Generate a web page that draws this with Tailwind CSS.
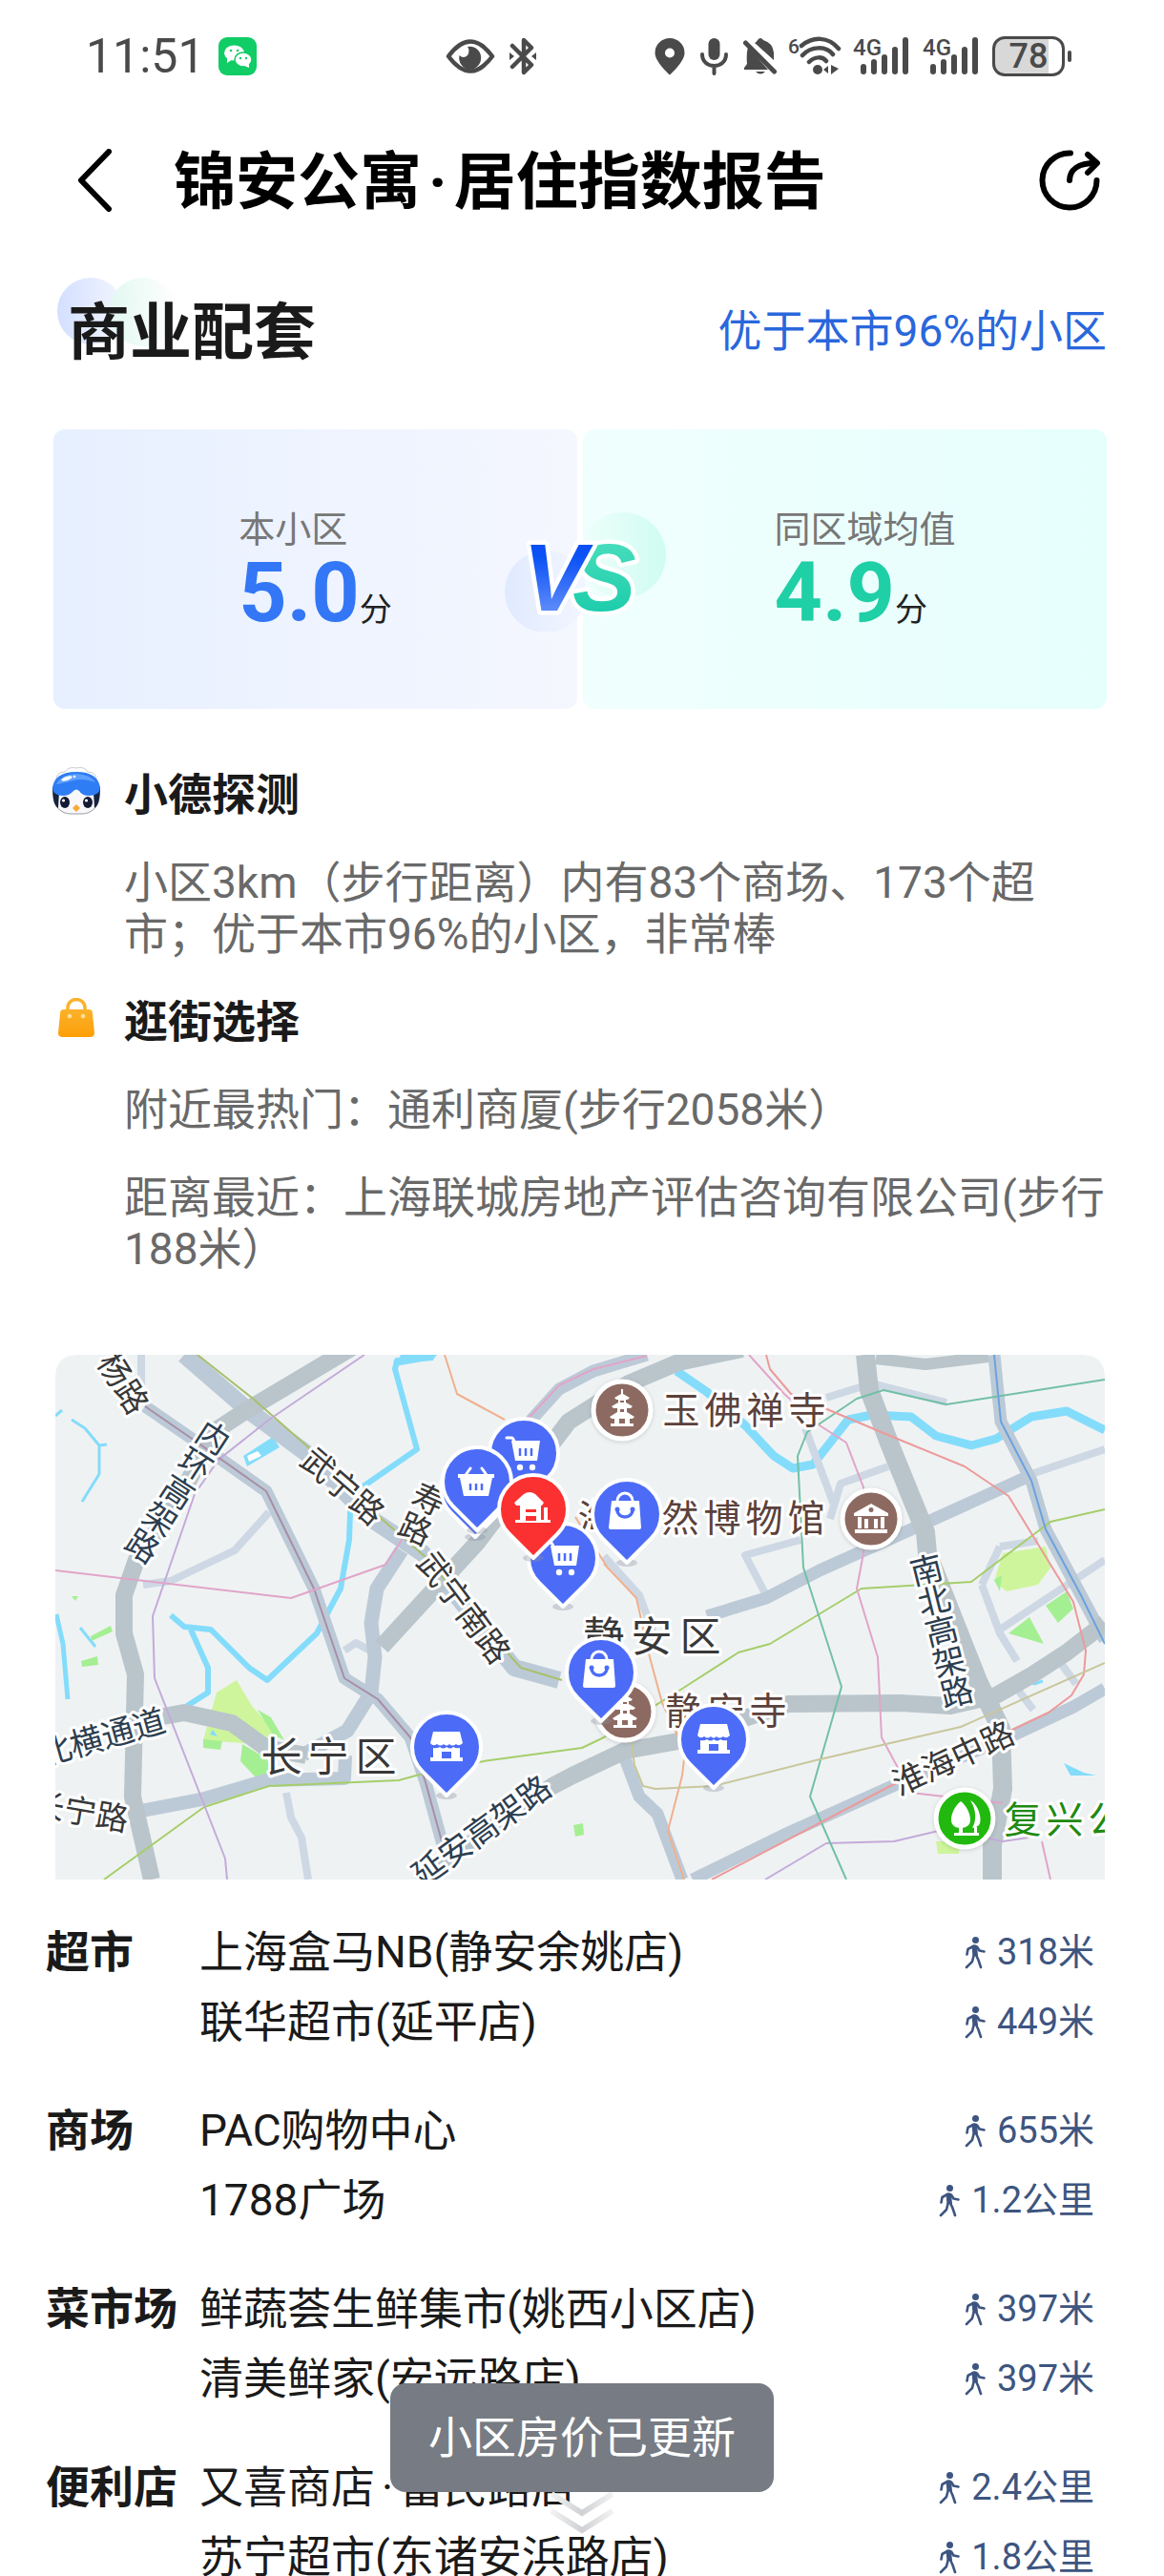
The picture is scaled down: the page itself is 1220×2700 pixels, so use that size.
<!DOCTYPE html>
<html lang="zh-CN">
<head>
  <meta charset="UTF-8">
  <meta name="viewport" content="width=device-width, initial-scale=1.0">
  <title>锦安公寓·居住指数报告</title>
  <script src="https://cdn.jsdelivr.net/npm/@tailwindcss/browser@4"></script>
</head>
<body class="h-screen overflow-hidden bg-white font-[Roboto,'Noto_Sans_CJK_SC',sans-serif] text-[#1a1a1a]">

  <!-- shared symbols -->
  <svg class="hidden">
    <symbol id="walk" viewBox="0 0 22 34">
      <circle cx="11.500" cy="3.500" r="3.500" fill="currentColor"/>
      <path d="M7.500 9.500Q10 7.500 13 9L14 20L8.500 20.500Z" fill="currentColor"/>
      <path d="M9 10L3.500 13L2.500 18.500M13 10.500L15.500 14.500L20.500 15.500M12 19L14.500 24.500L17 32M9.500 20L8 26L2 32" fill="none" stroke="currentColor" stroke-width="2.600" stroke-linecap="round" stroke-linejoin="round"/>
    </symbol>
    <symbol id="signal" viewBox="0 0 59 42">
      <text x="0" y="20" font-size="24" font-weight="500" fill="currentColor">4G</text>
      <path d="M11 32V37M22 27V37M33 22V37M44 14V37M55 4V37" stroke="currentColor" stroke-width="6" stroke-linecap="round"/>
    </symbol>
    <symbol id="pin" viewBox="-42 -42 84 100" overflow="visible">
      <ellipse cx="0" cy="51" rx="11" ry="4" fill="#8a8fa0" opacity=".35"/>
      <path d="M0 51L-25.500 25.500A36 36 0 1 1 25.500 25.500Z" fill="currentColor" stroke="#fff" stroke-width="4" stroke-linejoin="round"/>
    </symbol>
    <symbol id="i-cart" viewBox="-20 -20 40 40" overflow="visible">
      <path d="M-18 -16H-13Q-11 -16 -10 -12" fill="none" stroke="#fff" stroke-width="3" stroke-linecap="round"/>
      <path d="M-13 -13H17L14 8H-9Z" fill="#fff"/>
      <path d="M-4 -5V3M2 -5V3M8 -5V3" stroke="#4c6cf7" stroke-width="2.500"/>
      <circle cx="-4" cy="15" r="3.200" fill="#fff"/><circle cx="9" cy="15" r="3.200" fill="#fff"/>
    </symbol>
    <symbol id="i-basket" viewBox="-20 -20 40 40" overflow="visible">
      <path d="M-6 -14L-11 -7M6 -14L11 -7" stroke="#fff" stroke-width="3" stroke-linecap="round"/>
      <path d="M-19 -8H19V-4H17L13 15H-13L-17 -4H-19Z" fill="#fff"/>
      <path d="M-6 2V9M0 2V9M6 2V9" stroke="#4c6cf7" stroke-width="2.500"/>
    </symbol>
    <symbol id="i-bag" viewBox="-20 -20 40 40" overflow="visible">
      <path d="M-8 -9V-12A8 8 0 0 1 8 -12V-9" fill="none" stroke="#fff" stroke-width="3"/>
      <path d="M-14 -12H15L17 16Q17 18 15 18H-15Q-17 18 -17 16Z" fill="#fff"/>
      <path d="M-8 -2A8 7 0 0 0 8 -2" fill="none" stroke="#4c6cf7" stroke-width="3.500"/>
      <circle cx="-8" cy="-3" r="2.500" fill="#4c6cf7"/><circle cx="8" cy="-3" r="2.500" fill="#4c6cf7"/>
    </symbol>
    <symbol id="i-shop" viewBox="-20 -20 40 40" overflow="visible">
      <path d="M-14 -14H14L17 -2Q13 2 10 -1Q6 2 3 -1Q0 2 -3 -1Q-6 2 -10 -1Q-14 2 -17 -2Z" fill="#fff"/>
      <path d="M-14 3Q-10 4 -7 2Q-3 5 0 2Q4 5 7 2Q10 4 14 3V13H17V17H-17V13H-14Z" fill="#fff"/>
      <path d="M-5 7H5V14H-5Z" fill="#4c6cf7"/>
    </symbol>
    <symbol id="i-home" viewBox="-20 -20 40 40" overflow="visible">
      <path d="M-20 -5L-10 -14Q-4 -18 2 -14L11 -5L9 -2H-18Z" fill="#fff"/>
      <path d="M-14 -3H8V13H18V16H-19V13H-14Z" fill="#fff"/>
      <path d="M11 0H15V14H11Z" fill="#fff"/>
      <path d="M-8 2H3V5H-8ZM-8 9H3V14H-8Z" fill="#fb3030"/>
    </symbol>
    <symbol id="i-pagoda" viewBox="-20 -20 40 40" overflow="visible">
      <path d="M-1 -22H1V-17L8 -13L6 -11H4V-8L11 -4L9 -2H5V2L13 7L11 9H8V14H12V17H-12V14H-8V9H-11L-13 7L-5 2V-2H-9L-11 -4L-4 -8V-11H-6L-8 -13L-1 -17Z" fill="#fff"/>
      <path d="M-2 -10H2V-8H-2ZM-2 -1H2V2H-2ZM-3 9H3V14H-3Z" fill="#8d6a61"/>
    </symbol>
  </svg>

  <!-- status bar -->
  <div class="flex h-[118px] items-center pr-[104px] pl-[90px] text-[#4a4a4a]">
    <span class="text-[50px]">11:51</span>
    <svg class="ml-[14px] size-10" viewBox="0 0 40 40">
      <rect width="40" height="40" rx="9" fill="#10cd66"/>
      <ellipse cx="16.500" cy="16.500" rx="10.500" ry="8" fill="#fff"/><path d="M9 21L9 27L15 23Z" fill="#fff"/>
      <ellipse cx="26" cy="23.500" rx="9" ry="7.500" fill="#fff" stroke="#10cd66" stroke-width="1.500"/><path d="M32 28L32 32L27 30Z" fill="#fff"/>
      <g fill="#10cd66"><circle cx="13" cy="14" r="1.300"/><circle cx="20" cy="14" r="1.300"/><circle cx="23" cy="22" r="1.200"/><circle cx="29" cy="22" r="1.200"/></g>
    </svg>
    <svg class="ml-[198px] h-9 w-[52px]" viewBox="0 0 52 36">
      <path d="M3 18Q26 -13 49 18Q26 49 3 18Z" fill="none" stroke="currentColor" stroke-width="4.500" stroke-linejoin="round"/>
      <path d="M23 8A11.500 12 0 1 1 14.500 17Q19 21 23 17Q26 12 23 8Z" fill="currentColor"/>
    </svg>
    <svg class="ml-[15px] h-10 w-7" viewBox="0 0 28 40">
      <path d="M3 9L23 29L15 37V3L23 11L3 31" fill="none" stroke="currentColor" stroke-width="4.500" stroke-linecap="round" stroke-linejoin="round"/>
      <path d="M0 16L5 20L0 24ZM28 16L23 20L28 24Z" fill="currentColor"/>
    </svg>
    <div class="ml-auto flex items-center">
      <svg class="h-10 w-8" viewBox="0 0 32 40">
        <path fill-rule="evenodd" d="M16 1A15.500 15.500 0 0 0 .5 16.500C.5 26 16 39.500 16 39.500S31.500 26 31.500 16.500A15.500 15.500 0 0 0 16 1ZM16 11.500A5 5 0 1 1 16 21.500A5 5 0 1 1 16 11.500Z" fill="currentColor"/>
      </svg>
      <svg class="ml-4 h-10 w-[29px]" viewBox="0 0 29 40">
        <rect x="8.500" y="1" width="12" height="23" rx="6" fill="currentColor"/>
        <path d="M2 18C2 34 27 34 27 18M14.500 30V38" fill="none" stroke="currentColor" stroke-width="4" stroke-linecap="round"/>
      </svg>
      <svg class="ml-4 h-10 w-[35px]" viewBox="0 0 35 40">
        <path d="M5 10Q3 18 4 28L1 32V34H26L5 10ZM12 6Q14 5 15 3Q18 -1 21 3Q31 6 32 16L32 24ZM13 36H23Q18 41 13 36Z" fill="currentColor"/>
        <path d="M2.500 6L32.500 36" stroke="currentColor" stroke-width="5" stroke-linecap="round"/>
      </svg>
      <svg class="ml-3 h-[42px] w-[56px]" viewBox="0 0 56 42">
        <text x="0" y="18" font-size="21" font-weight="500" fill="currentColor">6</text>
        <path d="M14 10C26 0 42 0 53 13M15 20C24 10 40 10 47 19M22 27C28 21 36 21 40 26" fill="none" stroke="currentColor" stroke-width="4.500" stroke-linecap="round"/>
        <circle cx="31" cy="35" r="5" fill="currentColor"/><path d="M37 35L42 31V39ZM53 34L45 30V40Z" fill="currentColor"/>
      </svg>
      <svg class="ml-3 h-[42px] w-[59px]"><use href="#signal"/></svg>
      <svg class="ml-[14px] h-[42px] w-[59px]"><use href="#signal"/></svg>
      <div class="relative ml-[14px] flex h-[42px] w-[76px] items-center justify-center rounded-[13px] border-3 border-[#4a4a4a] bg-linear-to-r from-[#d8d8d8] from-80% to-white to-80% text-[36px] font-medium">
        78<span class="absolute -right-[10px] h-3 w-1 rounded-full bg-[#4a4a4a]"></span>
      </div>
    </div>
  </div>

  <!-- title bar -->
  <header class="flex h-[142px] items-center pr-[66px] pl-[80px] text-black">
    <button type="button" aria-label="返回">
      <svg class="h-[66px] w-[38px]" viewBox="0 0 38 66"><path d="M34 3L5 33L34 63" fill="none" stroke="currentColor" stroke-width="6" stroke-linecap="round" stroke-linejoin="round"/></svg>
    </button>
    <h1 class="ml-[64px] pt-[6px] text-[65px] font-bold">锦安公寓<span class="mx-[7px]">·</span>居住指数报告</h1>
    <button type="button" class="ml-auto" aria-label="分享">
      <svg class="size-[66px]" viewBox="0 0 66 66" fill="none" stroke="currentColor" stroke-width="6" stroke-linecap="round" stroke-linejoin="round">
        <path d="M34 4.500A28.500 28.500 0 1 0 61.500 33M33 33C33 22 42 15 60 15M52 6L62 15L52 25"/>
      </svg>
    </button>
  </header>

  <main>
    <div class="flex h-[174px] items-center justify-between pr-[60px] pl-[71px]">
      <h2 class="relative pt-[6px] text-[65px] font-bold">
        <span class="absolute -top-1 -left-[11px] size-[70px] rounded-full bg-linear-to-r from-[#d3dfff] to-[#f3f6ff]"></span>
        <span class="absolute -top-1 left-[43px] size-[72px] rounded-full bg-linear-to-r from-[#e2f8f1] to-white"></span>
        <span class="relative">商业配套</span>
      </h2>
      <a href="#" class="text-[46px] text-[#2a67dc]">优于本市96%的小区</a>
    </div>

    <!-- score comparison -->
    <div class="relative mt-4 mr-[60px] ml-[56px] grid h-[293px] grid-cols-2 gap-[6px]">
      <div class="flex items-center justify-center rounded-xl bg-linear-to-r from-[#e7f0ff] to-[#f5f7ff]">
        <div>
          <p class="text-[38px] leading-[48px] text-[#777]">本小区</p>
          <p class="flex items-baseline"><b class="text-[88px] leading-[84px] text-[#3377f6]">5.0</b><span class="text-[34px] leading-[48px] text-[#222]">分</span></p>
        </div>
      </div>
      <div class="flex items-center justify-center rounded-xl bg-linear-to-r from-[#f0fffd] to-[#e6fffd] pl-[42px]">
        <div>
          <p class="text-[38px] leading-[48px] text-[#777]">同区域均值</p>
          <p class="flex items-baseline"><b class="text-[88px] leading-[84px] text-[#1fcfa5]">4.9</b><span class="text-[34px] leading-[48px] text-[#222]">分</span></p>
        </div>
      </div>
      <svg class="absolute top-1/2 left-1/2 h-[130px] w-[184px] -translate-x-1/2 -translate-y-1/2" viewBox="0 0 184 130" font-family="Liberation Sans, sans-serif" font-weight="bold" font-style="italic" font-size="100">
        <defs>
          <linearGradient id="gv" x1="0" y1="0" x2="0" y2="1"><stop offset=".3" stop-color="#0a50f5"/><stop offset="1" stop-color="#7ba0fb"/></linearGradient>
          <linearGradient id="gs" x1="0" y1="0" x2="0" y2="1"><stop offset=".2" stop-color="#45dcbb"/><stop offset="1" stop-color="#12c9a7"/></linearGradient>
          <linearGradient id="cb"><stop offset="0" stop-color="#e0eafe"/><stop offset="1" stop-color="#f3f6ff"/></linearGradient>
          <linearGradient id="cg"><stop offset="0" stop-color="#effffb"/><stop offset="1" stop-color="#cffcf1"/></linearGradient>
        </defs>
        <circle cx="56" cy="88" r="43" fill="url(#cb)"/>
        <circle cx="137" cy="50" r="45" fill="url(#cg)"/>
        <g stroke="#fff" stroke-width="9" stroke-linejoin="round" paint-order="stroke">
          <text x="84" y="108" fill="url(#gs)">S</text>
          <text x="32" y="108" fill="url(#gv)">V</text>
        </g>
      </svg>
    </div>

    <!-- highlights -->
    <div class="mt-[63px] flex flex-col gap-[38px] pr-[56px] pl-[130px] text-[46px] leading-[54px] text-[#696969]">
      <h3 class="relative font-bold text-[#1a1a1a]">
        <svg class="absolute -top-[2px] -left-[75px] size-[50px]" viewBox="0 0 50 50">
          <path d="M4 16Q3 5 13 5Q17 -1 25 1Q34 -1 37 5Q47 5 46 16Z" fill="#fff" stroke="#c9cbd4"/>
          <rect x="1" y="12" width="48" height="37" rx="18" fill="#f8f8fb" stroke="#9a9ca8"/>
          <path d="M0 20Q0 40 6 43L7 26ZM50 20Q50 40 44 43L43 26Z" fill="#17233f"/>
          <path d="M0 22Q2 5 25 5Q48 5 50 22Q49 30 38 30Q31 30 28 25Q25 22 22 25Q18 30 11 30Q1 30 0 22Z" fill="#2f7df4"/>
          <path d="M4 18Q9 8 25 7Q40 8 45 16Q32 11 22 14Q10 17 4 18Z" fill="#5fa0ff"/>
          <ellipse cx="15" cy="12" rx="6" ry="2" fill="#fff" transform="rotate(-18 15 12)"/><circle cx="23" cy="10" r="1.300" fill="#fff"/>
          <ellipse cx="13" cy="37" rx="5" ry="6" fill="#141a33"/><ellipse cx="37" cy="37" rx="5" ry="6" fill="#141a33"/>
          <circle cx="11.500" cy="35" r="1.600" fill="#fff"/><circle cx="35.500" cy="35" r="1.600" fill="#fff"/>
          <path d="M25 39L29 43L25 47L21 43Z" fill="#f7a936"/>
        </svg>
        小德探测
      </h3>
      <p>小区3km（步行距离）内有83个商场、173个超市；优于本市96%的小区，非常棒</p>
      <h3 class="relative font-bold text-[#1a1a1a]">
        <svg class="absolute top-[2px] -left-[69px] h-[42px] w-[38px]" viewBox="0 0 38 42">
          <defs><linearGradient id="bag" x1="0" y1="0" x2="0" y2="1"><stop offset="0" stop-color="#fbb22c"/><stop offset="1" stop-color="#fd9f07"/></linearGradient></defs>
          <path d="M10 16V10A9 8.500 0 0 1 28 10V16" fill="none" stroke="#fbb22c" stroke-width="3.500"/>
          <path d="M6 12H32Q36 12 36 16L38 37Q38 41 33 41H5Q0 41 0 37L2 16Q2 12 6 12Z" fill="url(#bag)"/>
          <circle cx="12" cy="19" r="2.300" fill="#fee09a"/><circle cx="26" cy="19" r="2.300" fill="#fee09a"/>
        </svg>
        逛街选择
      </h3>
      <p>附近最热门：通利商厦(步行2058米）</p>
      <p>距离最近：上海联城房地产评估咨询有限公司(步行188米）</p>
    </div>

    <!-- map -->
    <svg class="mt-[84px] block w-full pr-[62px] pl-[58px]" viewBox="0 0 1100 550" fill="none" stroke-linejoin="round">
      <defs><clipPath id="mc"><path d="M0 24Q0 0 24 0H1076Q1100 0 1100 24V550H0Z"/></clipPath></defs>
      <g clip-path="url(#mc)">
        <rect width="1100" height="550" fill="#eff2f3"/>

        <!-- parks -->
        <path fill="#cef59c" d="M190 341L206 368L235 401L210 408L155 404L169 354ZM993 208L1038 201L1043 223L1030 241L997 248L984 237ZM923 510H947V523H925Z"/>
        <path fill="#a5ef93" d="M196 408L221 423L235 444L210 443L194 426ZM155 403L175 405L173 414L155 412ZM212 372L226 380L240 404L228 398ZM37 295L58 284L60 290L38 300ZM27 321L44 316L45 325L28 327ZM999 292L1021 275L1036 303ZM1038 263L1060 248L1067 266L1051 281ZM543 493L553 491L554 503L545 505ZM17 253H24L21 258ZM984 236L992 231L990 248Z"/>

        <!-- water -->
        <g stroke="#84dcfb" stroke-width="6">
          <path d="M396 3L358 6L356 15L379 99L324 137L309 165L308 194L299 245L274 292L222 341L203 328L163 288L135 285L121 273"/>
          <path d="M142 288L160 328L160 354L138 368"/>
          <path stroke-width="3" d="M17 68L31 77L46 95L46 125L28 154M46 95L54 94M0 64L7 58M26 286L42 306"/>
          <path stroke-width="5" d="M1 272L8 303L13 361"/>
          <path stroke-width="9" d="M651 17L683 39L723 74L753 106L773 119L794 115L831 68L856 63L897 65L923 85L960 95L986 88L1023 65L1060 59L1100 79"/>
          <path stroke-width="3" d="M1012 338L1026 345L1035 342M984 360L1000 352"/>
        </g>
        <path fill="#84dcfb" d="M362 0H400L396 5L356 12ZM197 106L228 86L235 97L201 117ZM1057 428L1078 438L1091 441L1064 441ZM162 398L165 393L170 400Z"/>
        <path fill="#fff" d="M201 106L212 101L216 106L203 112Z"/>

        <!-- minor streets -->
        <g stroke="#cdd8e4" stroke-width="8">
          <path d="M92 241L121 237L188 205L224 165M90 0V40M242 459L247 485L258 506L265 550M303 310L315 302L330 310"/>
          <path d="M745 252L723 210L781 194M786 77L816 157M812 172L823 135L873 117M808 45L856 30L934 50M1023 125L1100 99M971 241L990 292L1008 321M990 288L1100 215M990 201L971 241M990 201L1030 195M1055 325L1070 345M1008 350L1025 372M575 211L612 252L630 300"/>
        </g>

        <!-- secondary roads -->
        <g stroke="#bccad7" stroke-width="13">
          <path d="M94 54L149 92L221 143L271 245L303 339L338 361L372 401L388 448L408 521"/>
          <path stroke-width="18" d="M135 0L203 59L263 103L331 172L385 208L481 328L528 341"/>
          <path stroke-width="15" d="M363 205L337 245L331 281L335 317L331 354L306 394L260 419"/>
          <path stroke-width="14" d="M90 478L153 466L221 446L303 444L304 420"/>
          <path d="M490 78L528 36L564 17L620 0M683 274L745 255L801 226L897 183L1023 126M984 0L991 70L1023 132L1038 183L1075 252L1100 299M597 423L612 463L631 481L657 550M668 550L764 503L882 450L1001 400L1067 369L1100 350"/>
        </g>

        <!-- expressways -->
        <g stroke="#b9c5cb" stroke-width="18">
          <path d="M320 -13L199 59L167 80L130 150L85 215L72 252V292L84 335L81 463L101 550"/>
          <path d="M342 306L442 197L538 70L601 30L653 8L720 -6"/>
          <path d="M113 379L135 375L185 386L221 412L263 420M380 552L521 452L542 441L597 415L653 405L710 385L768 366L886 365L938 368L986 357L1023 336L1060 312L1100 281"/>
          <path stroke-width="20" d="M849 0L853 37L875 95L912 186L914 208L967 342L991 392L993 455L982 514V550"/>
          <path stroke-width="12" d="M860 4L912 10L978 2"/>
        </g>

        <!-- metro lines -->
        <g stroke-width="2">
          <path stroke="#a5ce6a" d="M51 550L156 474L224 452L360 446L378 441L449 426L552 412L575 401L657 350L716 312L749 303L845 245L960 238L1043 175L1100 162"/>
          <path stroke="#a9c06c" d="M149 0L206 45L263 95L342 172L388 212L478 317L488 328L531 341"/>
          <path stroke="#c3abd9" d="M324 0L224 68L171 110L146 146L102 274L104 339L178 528L180 550M744 550L808 512L879 510L934 497L993 510L1020 506"/>
          <path stroke="#a88ea6" d="M94 54L149 92L221 143L271 245L303 339L338 361L372 401L388 448L408 521"/>
          <path stroke="#e0a5c9" d="M0 226L247 255L346 220L363 194L501 61L528 32L564 15L620 1M727 0L764 41L801 74L829 92L847 139V208L840 245L862 317L866 401L897 459L993 470M1034 510L1043 550"/>
          <path stroke="#f0b08e" d="M408 0L421 41L471 68M575 219L609 255L623 317L636 365L660 415L657 441L642 499L659 550M545 170L580 225"/>
          <path stroke="#72c0a6" d="M1100 26L934 52L868 37L840 46L788 81L778 106L784 223L824 348L791 463L829 550"/>
          <path stroke="#ec9a9a" d="M745 0L749 15L771 41L875 85L953 117L999 148L1067 259L1080 310L1078 335L1065 357L1041 375L1001 394L875 452L688 550"/>
          <path stroke="#6aa2df" d="M984 0L991 70L1023 132L1038 183L1075 252L1100 303"/>
          <path stroke="#c8c79c" d="M1100 323L949 390L797 425L690 452L629 455L616 452L607 430L603 401"/>
        </g>

        <!-- road names -->
        <g font-size="34" fill="#383838" stroke="#fff" stroke-width="6" paint-order="stroke" text-anchor="middle">
          <text transform="translate(71 30) rotate(58)" y="12">杨路</text>
          <text transform="translate(301 138) rotate(41)" y="12">武宁路</text>
          <text transform="translate(428 265) rotate(53)" y="12">武宁南路</text>
          <text transform="translate(391 152) rotate(24)" x="0 0" y="12 46">寿路</text>
          <text transform="translate(26 479) rotate(10)" y="12">长宁路</text>
          <text transform="translate(941 423) rotate(-25)" y="12">淮海中路</text>
          <g fill="#2c3e50">
            <text transform="translate(165 87) rotate(33)" x="0 0 0 0 0" y="12 46 80 114 148">内环高架路</text>
            <text transform="translate(913 226) rotate(-14)" x="0 0 0 0 0" y="12 45 78 111 144">南北高架路</text>
            <text transform="translate(49 401) rotate(-16)" y="12">北横通道</text>
            <text transform="translate(447 499) rotate(-36)" y="12">延安高架路</text>
          </g>
        </g>

        <!-- districts and places -->
        <g stroke="#fff" stroke-width="6" paint-order="stroke" text-anchor="middle">
          <text font-size="43" fill="#383838" x="237 286 336" y="437">长宁区</text>
          <text font-size="43" fill="#383838" x="575 625 676" y="311">静安区</text>
          <g font-size="39" fill="#5b413b">
            <text x="656 700 744 788" y="72">玉佛禅寺</text>
            <text x="567 611 655 699 743 787" y="185">海自然博物馆</text>
            <text x="659 703 747" y="387">静安寺</text>
            <text x="1014 1058 1102" y="501" fill="#1f8a12">复兴公</text>
          </g>
        </g>
        <g stroke="#fff" stroke-width="5" fill="#8d6a61" class="drop-shadow-sm">
          <circle cx="594" cy="58" r="30"/><circle cx="855" cy="172" r="30"/><circle cx="597" cy="374" r="30"/>
          <circle cx="953" cy="486" r="30" fill="#22b90e"/>
        </g>
        <use href="#i-pagoda" x="574" y="38" width="40" height="40"/>
        <use href="#i-pagoda" x="577" y="354" width="40" height="40"/>
        <path fill="#fff" fill-rule="evenodd" d="M855 156L873 166V169H837V166ZM855 160A2.500 2.500 0 1 0 855 165A2.500 2.500 0 1 0 855 160ZM841 170H845V182H841ZM848 172H852V182H848ZM858 172H862V182H858ZM865 170H869V182H865ZM838 183H872V187H838Z"/>
        <g fill="#fff">
          <path d="M949 468C957 474 962 488 957 493Q954 496 949 496Q943 496 941 493C936 488 941 474 949 468Z"/>
          <path d="M959 467C968 472 972 488 968 493Q965 496 961 496C966 488 965 476 959 467Z"/>
          <path d="M947 494H951V501H963V495H966V501H968V504H942V501H947Z"/>
        </g>

        <!-- shop markers -->
        <g color="#4c6cf7">
          <g transform="translate(491 103)"><use href="#pin" x="-42" y="-42" width="84" height="100"/><use href="#i-cart" x="-20" y="-20" width="40" height="40"/></g>
          <g transform="translate(440 140)"><use href="#pin" x="-42" y="-42" width="84" height="100"/></g>
          <g transform="translate(442 133)"><use href="#pin" x="-42" y="-42" width="84" height="100"/><use href="#i-basket" x="-21" y="-20" width="40" height="40"/></g>
          <g transform="translate(532 213)"><use href="#pin" x="-42" y="-42" width="84" height="100"/><use href="#i-cart" x="-20" y="-20" width="40" height="40"/></g>
          <g transform="translate(599 167)"><use href="#pin" x="-42" y="-42" width="84" height="100"/><use href="#i-bag" x="-22" y="-22" width="40" height="40"/></g>
          <g transform="translate(572 333)"><use href="#pin" x="-42" y="-42" width="84" height="100"/><use href="#i-bag" x="-22" y="-22" width="40" height="40"/></g>
          <g transform="translate(410 411)"><use href="#pin" x="-42" y="-42" width="84" height="100"/><use href="#i-shop" x="-20" y="-22" width="40" height="40"/></g>
          <g transform="translate(690 403)"><use href="#pin" x="-42" y="-42" width="84" height="100"/><use href="#i-shop" x="-20" y="-22" width="40" height="40"/></g>
          <g transform="translate(501 162)" color="#fb3030"><use href="#pin" x="-42" y="-42" width="84" height="100"/><use href="#i-home" x="-20" y="-22" width="40" height="40"/></g>
        </g>
      </g>
    </svg>

    <!-- nearby shops -->
    <div class="mt-10 flex flex-col gap-[41px] pr-[73px] pl-[48px] text-[46px] leading-[73px]">
      <section class="flex">
        <h3 class="w-[161px] font-bold">超市</h3>
        <ul class="flex-1">
          <li class="flex justify-between">上海盒马NB(静安余姚店)<span class="flex items-center gap-3 text-[38px] text-[#3d5580]"><svg class="h-[34px] w-[22px]"><use href="#walk"/></svg>318米</span></li>
          <li class="flex justify-between">联华超市(延平店)<span class="flex items-center gap-3 text-[38px] text-[#3d5580]"><svg class="h-[34px] w-[22px]"><use href="#walk"/></svg>449米</span></li>
        </ul>
      </section>
      <section class="flex">
        <h3 class="w-[161px] font-bold">商场</h3>
        <ul class="flex-1">
          <li class="flex justify-between">PAC购物中心<span class="flex items-center gap-3 text-[38px] text-[#3d5580]"><svg class="h-[34px] w-[22px]"><use href="#walk"/></svg>655米</span></li>
          <li class="flex justify-between">1788广场<span class="flex items-center gap-3 text-[38px] text-[#3d5580]"><svg class="h-[34px] w-[22px]"><use href="#walk"/></svg>1.2公里</span></li>
        </ul>
      </section>
      <section class="flex">
        <h3 class="w-[161px] font-bold">菜市场</h3>
        <ul class="flex-1">
          <li class="flex justify-between">鲜蔬荟生鲜集市(姚西小区店)<span class="flex items-center gap-3 text-[38px] text-[#3d5580]"><svg class="h-[34px] w-[22px]"><use href="#walk"/></svg>397米</span></li>
          <li class="flex justify-between">清美鲜家(安远路店)<span class="flex items-center gap-3 text-[38px] text-[#3d5580]"><svg class="h-[34px] w-[22px]"><use href="#walk"/></svg>397米</span></li>
        </ul>
      </section>
      <section class="flex">
        <h3 class="w-[161px] font-bold">便利店</h3>
        <ul class="flex-1">
          <li class="flex justify-between"><span>又喜商店<span class="mx-[7px]">·</span>富民路店</span><span class="flex items-center gap-3 text-[38px] text-[#3d5580]"><svg class="h-[34px] w-[22px]"><use href="#walk"/></svg>2.4公里</span></li>
          <li class="flex justify-between">苏宁超市(东诸安浜路店)<span class="flex items-center gap-3 text-[38px] text-[#3d5580]"><svg class="h-[34px] w-[22px]"><use href="#walk"/></svg>1.8公里</span></li>
        </ul>
      </section>
    </div>
  </main>

  <!-- scroll hint and toast -->
  <svg class="fixed bottom-10 left-1/2 h-[52px] w-[72px] -translate-x-1/2" viewBox="0 0 72 52" fill="none" stroke="url(#hint)" stroke-width="6">
    <defs><linearGradient id="hint" gradientUnits="userSpaceOnUse" x1="0" y1="0" x2="72" y2="0"><stop offset="0" stop-color="#f6f6f6"/><stop offset=".5" stop-color="#cfd1d4"/><stop offset="1" stop-color="#f6f6f6"/></linearGradient></defs>
    <path d="M4 6L36 26L68 6M4 24L36 44L68 24"/>
  </svg>
  <div role="status" class="fixed bottom-[88px] left-1/2 -translate-x-1/2 rounded-2xl bg-[#777b83] px-10 text-[46px] leading-[114px] whitespace-nowrap text-white">小区房价已更新</div>
</body>
</html>
